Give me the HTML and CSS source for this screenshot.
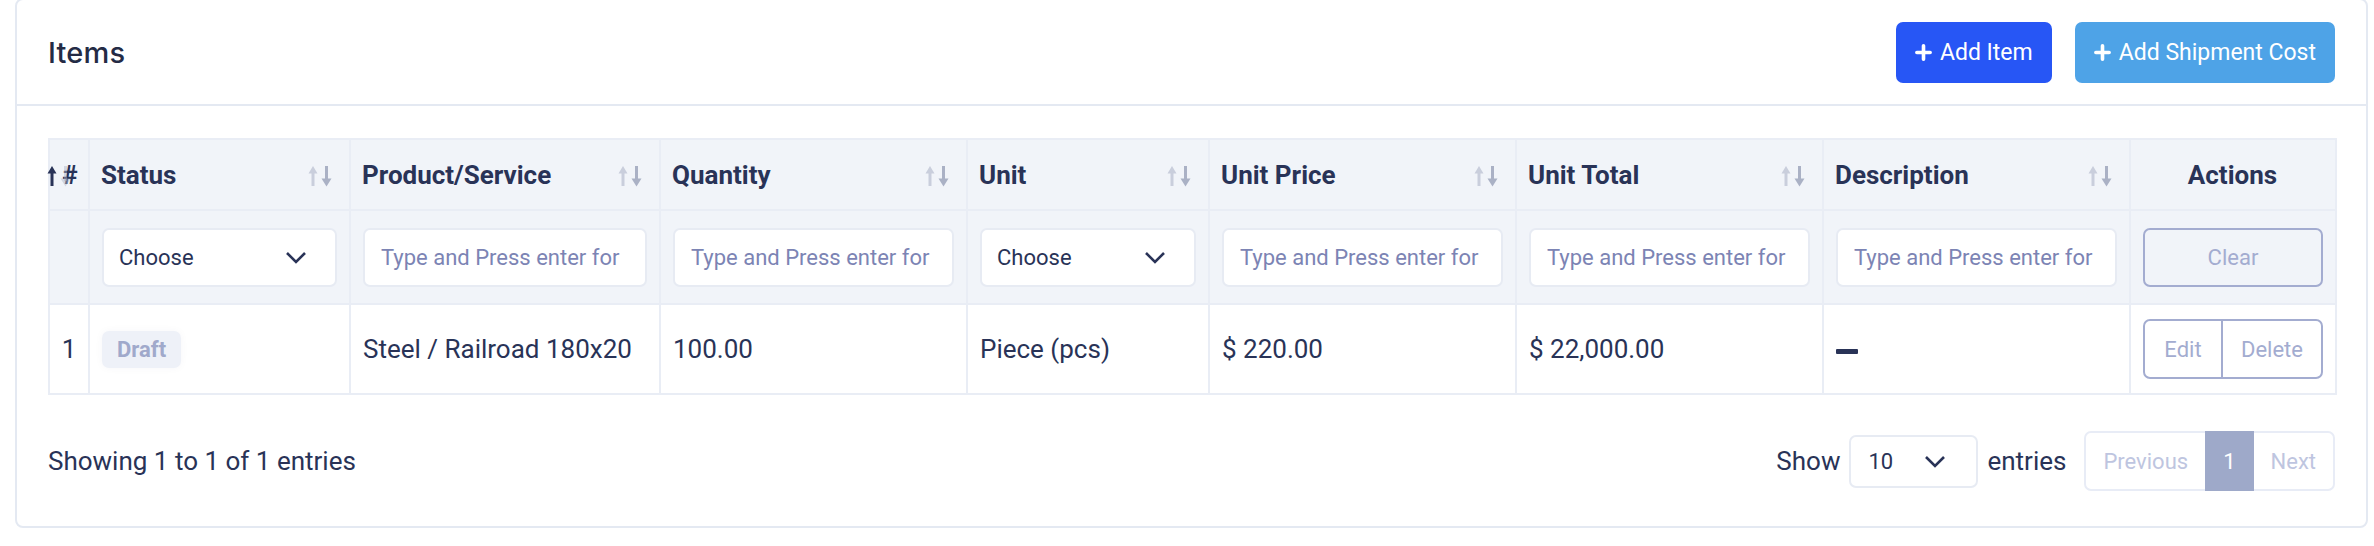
FILE: index.html
```html
<!DOCTYPE html>
<html lang="en">
<head>
    <meta charset="UTF-8">
    <meta name="viewport" content="width=device-width, initial-scale=1.0">
    <title>Items</title>
    <link rel="stylesheet" href="styles.css">
</head>
<body>
    <div class="card">
        <div class="card-header">
            <h2 class="card-title">Items</h2>
            <div class="header-actions">
                <button class="btn btn-primary">
                    <svg class="plus" viewBox="0 0 20 20"><path d="M10 3v14M3 10h14"/></svg>Add Item
                </button>
                <button class="btn btn-info">
                    <svg class="plus" viewBox="0 0 20 20"><path d="M10 3v14M3 10h14"/></svg>Add Shipment Cost
                </button>
            </div>
        </div>

        <div class="card-body">
            <table class="items-table">
                <colgroup>
                    <col style="width: 40px">
                    <col style="width: 261px">
                    <col style="width: 310px">
                    <col style="width: 307px">
                    <col style="width: 242px">
                    <col style="width: 307px">
                    <col style="width: 307px">
                    <col style="width: 307px">
                    <col style="width: 206px">
                </colgroup>
                <thead>
                    <tr class="head-row">
                        <th class="col-index sorted">#
                            <svg class="sort-icon" viewBox="0 0 26 22"><path class="up" d="M5 21V6"/><path class="up-head" d="M0.5 8.5 5 1 9.5 8.5z"/><path class="down" d="M18.5 1v15"/><path class="down-head" d="M13.5 13.5l5 8 5-8z"/></svg>
                        </th>
                        <th>Status
                            <svg class="sort-icon" viewBox="0 0 26 22"><path class="up" d="M5 21V6"/><path class="up-head" d="M0.5 8.5 5 1 9.5 8.5z"/><path class="down" d="M18.5 1v15"/><path class="down-head" d="M13.5 13.5l5 8 5-8z"/></svg>
                        </th>
                        <th>Product/Service
                            <svg class="sort-icon" viewBox="0 0 26 22"><path class="up" d="M5 21V6"/><path class="up-head" d="M0.5 8.5 5 1 9.5 8.5z"/><path class="down" d="M18.5 1v15"/><path class="down-head" d="M13.5 13.5l5 8 5-8z"/></svg>
                        </th>
                        <th>Quantity
                            <svg class="sort-icon" viewBox="0 0 26 22"><path class="up" d="M5 21V6"/><path class="up-head" d="M0.5 8.5 5 1 9.5 8.5z"/><path class="down" d="M18.5 1v15"/><path class="down-head" d="M13.5 13.5l5 8 5-8z"/></svg>
                        </th>
                        <th>Unit
                            <svg class="sort-icon" viewBox="0 0 26 22"><path class="up" d="M5 21V6"/><path class="up-head" d="M0.5 8.5 5 1 9.5 8.5z"/><path class="down" d="M18.5 1v15"/><path class="down-head" d="M13.5 13.5l5 8 5-8z"/></svg>
                        </th>
                        <th>Unit Price
                            <svg class="sort-icon" viewBox="0 0 26 22"><path class="up" d="M5 21V6"/><path class="up-head" d="M0.5 8.5 5 1 9.5 8.5z"/><path class="down" d="M18.5 1v15"/><path class="down-head" d="M13.5 13.5l5 8 5-8z"/></svg>
                        </th>
                        <th>Unit Total
                            <svg class="sort-icon" viewBox="0 0 26 22"><path class="up" d="M5 21V6"/><path class="up-head" d="M0.5 8.5 5 1 9.5 8.5z"/><path class="down" d="M18.5 1v15"/><path class="down-head" d="M13.5 13.5l5 8 5-8z"/></svg>
                        </th>
                        <th>Description
                            <svg class="sort-icon" viewBox="0 0 26 22"><path class="up" d="M5 21V6"/><path class="up-head" d="M0.5 8.5 5 1 9.5 8.5z"/><path class="down" d="M18.5 1v15"/><path class="down-head" d="M13.5 13.5l5 8 5-8z"/></svg>
                        </th>
                        <th class="col-actions">Actions</th>
                    </tr>
                    <tr class="filter-row">
                        <th></th>
                        <th>
                            <div class="select-box">
                                <span>Choose</span>
                                <svg class="chevron" viewBox="0 0 22 13"><path d="M2 2l9 9 9-9"/></svg>
                            </div>
                        </th>
                        <th><input class="filter-input" type="text" placeholder="Type and Press enter for search"></th>
                        <th><input class="filter-input" type="text" placeholder="Type and Press enter for search"></th>
                        <th>
                            <div class="select-box">
                                <span>Choose</span>
                                <svg class="chevron" viewBox="0 0 22 13"><path d="M2 2l9 9 9-9"/></svg>
                            </div>
                        </th>
                        <th><input class="filter-input" type="text" placeholder="Type and Press enter for search"></th>
                        <th><input class="filter-input" type="text" placeholder="Type and Press enter for search"></th>
                        <th><input class="filter-input" type="text" placeholder="Type and Press enter for search"></th>
                        <th><button class="btn-outline btn-clear">Clear</button></th>
                    </tr>
                </thead>
                <tbody>
                    <tr class="data-row">
                        <td class="col-index">1</td>
                        <td><span class="badge">Draft</span></td>
                        <td>Steel / Railroad 180x20</td>
                        <td>100.00</td>
                        <td>Piece (pcs)</td>
                        <td>$ 220.00</td>
                        <td>$ 22,000.00</td>
                        <td><span class="empty-dash" title="—"></span></td>
                        <td>
                            <div class="btn-group">
                                <button class="btn-outline">Edit</button>
                                <button class="btn-outline">Delete</button>
                            </div>
                        </td>
                    </tr>
                </tbody>
            </table>

            <div class="table-footer">
                <div class="table-info">Showing 1 to 1 of 1 entries</div>
                <div class="footer-right">
                    <div class="length-menu">
                        <span>Show</span>
                        <div class="select-box select-small">
                            <span>10</span>
                            <svg class="chevron" viewBox="0 0 22 13"><path d="M2 2l9 9 9-9"/></svg>
                        </div>
                        <span>entries</span>
                    </div>
                    <ul class="pagination">
                        <li class="page disabled">Previous</li>
                        <li class="page active">1</li>
                        <li class="page disabled">Next</li>
                    </ul>
                </div>
            </div>
        </div>
    </div>
</body>
</html>
```

FILE: styles.css
```css
body {
    margin: 0;
    padding: 0;
    background-color: #fff;
    font-family: Roboto, "Liberation Sans", sans-serif;
    color: #293357;
}

.card {
    margin: -2px 6px 0 15px;
    border: 2px solid #e4e9f2;
    border-radius: 8px;
    background-color: #fff;
    height: 530px;
    box-sizing: border-box;
}

.card-header {
    display: flex;
    align-items: center;
    justify-content: space-between;
    height: 106px;
    box-sizing: border-box;
    padding: 0 31px;
    border-bottom: 2px solid #e4e9f2;
}

.card-title {
    margin: 0;
    font-family: Inter, "Noto Sans", sans-serif;
    font-size: 29px;
    font-weight: 500;
    color: #242b45;
    letter-spacing: 0.2px;
}

.header-actions {
    display: flex;
    gap: 23px;
}

.btn {
    display: inline-flex;
    align-items: center;
    gap: 7px;
    height: 61px;
    padding: 0 19px 0 18px;
    border: none;
    border-radius: 7px;
    font-family: Roboto, sans-serif;
    font-size: 23px;
    color: #fff;
    cursor: pointer;
}

.btn-primary {
    background-color: #2756f5;
}

.btn-info {
    background-color: #4ea3e7;
}

.plus {
    width: 19px;
    height: 19px;
    fill: none;
    stroke: #fff;
    stroke-width: 3.8;
    stroke-linecap: round;
}

.card-body {
    padding: 32px 31px 0;
}

/* table */

.items-table {
    width: 2287px;
    table-layout: fixed;
    border-collapse: collapse;
    font-size: 26px;
}

.items-table th,
.items-table td {
    border: 2px solid #e9edf5;
    padding: 0 12px;
    text-align: left;
    white-space: nowrap;
    overflow: hidden;
}

.head-row th {
    position: relative;
    height: 69px;
    background-color: #f1f4f9;
    font-weight: 700;
    padding-left: 11px;
}

.sort-icon {
    position: absolute;
    right: 15px;
    top: 25px;
    width: 26px;
    height: 22px;
}

.sort-icon .up {
    stroke: #c9cedc;
    stroke-width: 3;
}

.sort-icon .up-head {
    fill: #c9cedc;
}

.sort-icon .down {
    stroke: #aab1c5;
    stroke-width: 3;
}

.sort-icon .down-head {
    fill: #aab1c5;
}

.head-row th.col-index {
    padding: 0 0 0 2px;
    text-align: center;
    overflow: visible;
}

.col-index .sort-icon {
    left: -3px;
    right: auto;
    top: 25px;
}

.col-index.sorted .up {
    stroke: #293357;
}

.col-index.sorted .up-head {
    fill: #293357;
}

.col-index.sorted .down,
.col-index.sorted .down-head {
    opacity: 0.45;
}

.head-row th.col-actions {
    text-align: center;
}

.filter-row th {
    height: 92px;
    background-color: #f1f4f9;
    font-weight: 400;
}

.filter-input {
    display: block;
    width: 100%;
    height: 59px;
    box-sizing: border-box;
    padding: 0 21px 0 16px;
    border: 2px solid #e7ebf3;
    border-radius: 7px;
    background-color: #fff;
    font-family: Roboto, sans-serif;
    font-size: 22px;
    color: #293357;
    outline: none;
}

.filter-input::placeholder {
    color: #7c84b4;
}

.select-box {
    display: flex;
    align-items: center;
    justify-content: space-between;
    height: 59px;
    box-sizing: border-box;
    padding: 0 28px 0 15px;
    border: 2px solid #e7ebf3;
    border-radius: 7px;
    background-color: #fff;
    font-size: 22px;
    color: #293357;
}

.chevron {
    width: 22px;
    height: 13px;
    fill: none;
    stroke: #293357;
    stroke-width: 2.6;
}

.btn-outline {
    border: 2px solid #a3acd0;
    background-color: transparent;
    color: #a3acd0;
    font-family: Roboto, sans-serif;
    font-size: 22px;
    border-radius: 7px;
    cursor: pointer;
}

.btn-clear {
    display: block;
    width: 100%;
    height: 59px;
}

.data-row td {
    height: 88px;
    background-color: #fff;
}

.items-table td.col-index {
    padding: 0;
    text-align: center;
}

.badge {
    display: inline-block;
    height: 37px;
    line-height: 37px;
    padding: 0 15px;
    border-radius: 7px;
    background-color: #eef1f8;
    color: #a0a9cb;
    font-size: 22px;
    font-weight: 700;
    box-shadow: 0 0 8px rgba(40, 50, 90, 0.04);
    vertical-align: middle;
}

.empty-dash {
    display: inline-block;
    width: 22px;
    height: 5px;
    border-radius: 1px;
    background-color: #293357;
    vertical-align: middle;
}

.btn-group {
    display: flex;
    height: 60px;
}

.btn-group .btn-outline {
    height: 60px;
    padding: 0 17px;
}

.btn-group .btn-outline:first-child {
    width: 80px;
    border-radius: 7px 0 0 7px;
}

.btn-group .btn-outline:last-child {
    flex: 1;
    border-left: none;
    border-radius: 0 7px 7px 0;
}

/* footer */

.table-footer {
    display: flex;
    align-items: center;
    justify-content: space-between;
    margin-top: 36px;
}

.table-info {
    font-size: 26px;
}

.footer-right {
    display: flex;
    align-items: center;
    gap: 18px;
}

.length-menu {
    display: flex;
    align-items: center;
    gap: 9px;
    font-size: 26px;
}

.select-small {
    width: 129px;
    height: 53px;
    padding: 0 30px 0 17px;
}

.pagination {
    display: flex;
    height: 60px;
    box-sizing: border-box;
    margin: 0;
    padding: 0;
    list-style: none;
    border: 2px solid #e8ecf6;
    border-radius: 7px;
    font-size: 22px;
}

.page {
    display: flex;
    align-items: center;
    padding: 0 17px;
}

.page.disabled {
    color: #bec5e0;
}

.page.active {
    margin: -2px 0;
    padding: 0 18px;
    background-color: #9ea9c9;
    color: #fff;
}
```
